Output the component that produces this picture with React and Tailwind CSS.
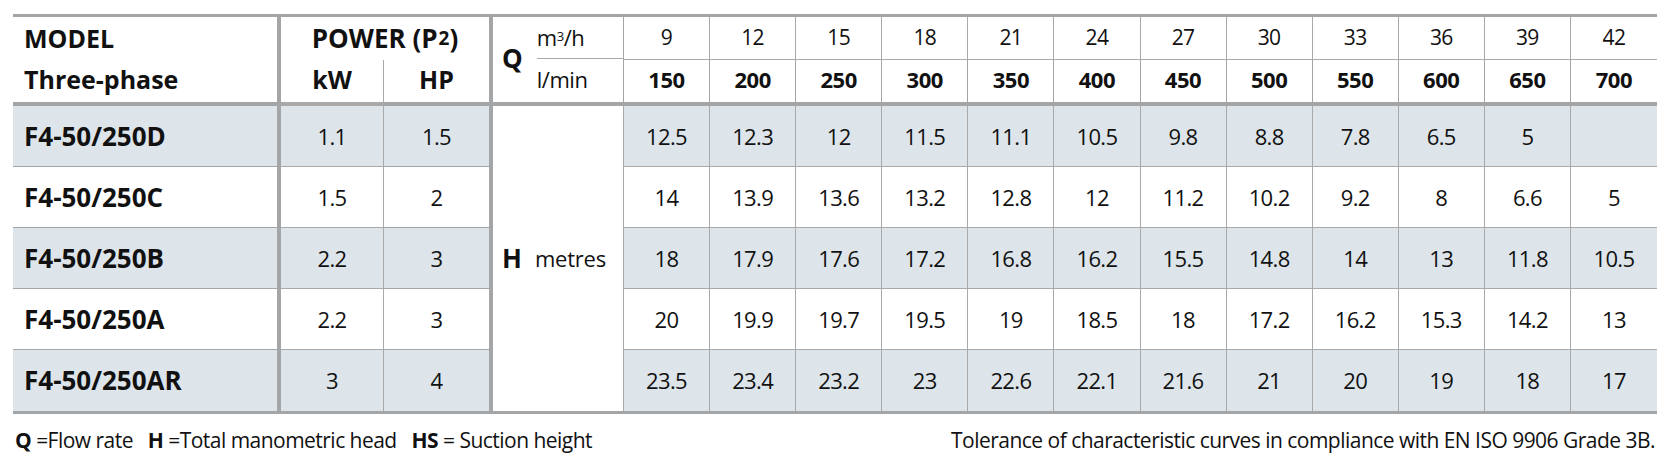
import React from 'react';

const flowM3 = [9, 12, 15, 18, 21, 24, 27, 30, 33, 36, 39, 42];
const flowL = [150, 200, 250, 300, 350, 400, 450, 500, 550, 600, 650, 700];

const models = [
  { name: 'F4-50/250D', kw: '1.1', hp: '1.5', h: ['12.5', '12.3', '12', '11.5', '11.1', '10.5', '9.8', '8.8', '7.8', '6.5', '5', ''] },
  { name: 'F4-50/250C', kw: '1.5', hp: '2', h: ['14', '13.9', '13.6', '13.2', '12.8', '12', '11.2', '10.2', '9.2', '8', '6.6', '5'] },
  { name: 'F4-50/250B', kw: '2.2', hp: '3', h: ['18', '17.9', '17.6', '17.2', '16.8', '16.2', '15.5', '14.8', '14', '13', '11.8', '10.5'] },
  { name: 'F4-50/250A', kw: '2.2', hp: '3', h: ['20', '19.9', '19.7', '19.5', '19', '18.5', '18', '17.2', '16.2', '15.3', '14.2', '13'] },
  { name: 'F4-50/250AR', kw: '3', hp: '4', h: ['23.5', '23.4', '23.2', '23', '22.6', '22.1', '21.6', '21', '20', '19', '18', '17'] },
];

const App = () => {
  return (
    <div className="w-[1667px] h-[458px] bg-white text-[#111] overflow-hidden" style={{ fontFamily: '"Open Sans", "Noto Sans", sans-serif' }}>
      <div className="ml-[13px] pt-[14px] w-[1644px]">
        {/* Table */}
        <div className="grid grid-cols-[268px_103px_109px_131px_repeat(12,minmax(0,1fr))] grid-rows-[43px_46px_61px_61px_61px_61px_61px] border-t-[3px] border-b-[3px] border-[#a3a5a7]">
          {/* Header row 1 */}
          <div className="row-span-2 flex flex-col border-r-4 border-b-4 border-[#a3a5a7] pl-[11px] text-[25px] font-bold">
            <div className="h-[43px] flex items-center">MODEL</div>
            <div className="flex-1 flex items-center pb-[3px]">Three-phase</div>
          </div>
          <div className="col-span-2 flex items-center justify-center border-r-4 border-[#a3a5a7] text-[26px] font-bold">
            POWER (P<span className="text-[19px] ml-[1px]">2</span>)
          </div>
          <div className="row-span-2 flex items-center border-r border-b-4 border-[#a3a5a7] pl-[9px]">
            <span className="text-[26px] font-bold mr-[14px] mt-[-2px]">Q</span>
            <div className="flex-1 flex flex-col h-full">
              <div className="h-[42px] flex items-center border-b border-[#a9a9a9] text-[22px] tracking-[-0.02em]">
                m<sup className="text-[13px] relative top-[-2px]">3</sup>/h
              </div>
              <div className="flex-1 flex items-center text-[22px] tracking-[-0.02em] pb-[3px]">l/min</div>
            </div>
          </div>
          {flowM3.map((v, i) => (
            <div key={'m' + i} className={`flex items-center justify-center border-b border-[#a9a9a9] text-[21px] tracking-[-0.03em] ${i < 11 ? 'border-r' : ''}`}>
              {v}
            </div>
          ))}

          {/* Header row 2 */}
          <div className="flex items-center justify-center border-r border-b-4 border-[#a9a9a9] text-[25px] font-bold pb-[3px]">
            kW
          </div>
          <div className="flex items-center justify-center border-r-4 border-b-4 border-[#a3a5a7] text-[25px] font-bold pb-[3px]">HP</div>
          {flowL.map((v, i) => (
            <div key={'l' + i} className={`flex items-center justify-center border-b-4 border-[#a3a5a7] text-[22px] font-bold tracking-[-0.02em] pb-[3px] ${i < 11 ? 'border-r' : ''}`}>
              <span>{v}</span>
            </div>
          ))}

          {/* Body */}
          {models.map((m, r) => {
            const shade = r % 2 === 0 ? 'bg-[#dde5ea]' : 'bg-white';
            const last = r === models.length - 1;
            const line = last ? '' : 'border-b';
            return (
              <React.Fragment key={m.name}>
                <div className={`flex items-center pl-[11px] border-r-4 border-[#a3a5a7] ${line} ${shade} text-[26px] font-bold`}>
                  {m.name}
                </div>
                <div className={`flex items-center justify-center border-r border-[#a9a9a9] ${line} ${shade} text-[22px] tracking-[-0.03em]`}>
                  {m.kw}
                </div>
                <div className={`flex items-center justify-center border-r-4 border-[#a3a5a7] ${line} ${shade} text-[22px] tracking-[-0.03em]`}>
                  {m.hp}
                </div>
                {r === 0 && (
                  <div className="row-span-5 flex items-center border-r border-[#a9a9a9] bg-white pl-[9px]">
                    <span className="text-[26px] font-bold mr-[13px]">H</span>
                    <span className="text-[22px] tracking-[-0.01em]">metres</span>
                  </div>
                )}
                {m.h.map((v, i) => (
                  <div key={i} className={`flex items-center justify-center border-[#a9a9a9] ${line} ${i < 11 ? 'border-r' : ''} ${shade} text-[22px] tracking-[-0.03em]`}>
                    {v}
                  </div>
                ))}
              </React.Fragment>
            );
          })}
        </div>

        {/* Footer notes */}
        <div className="mt-[11px] flex items-center justify-between px-[2px] text-[21px] tracking-[-0.025em]">
          <div>
            <span className="font-bold">Q</span> =Flow rate&nbsp;&nbsp; <span className="font-bold">H</span> =Total manometric head&nbsp;&nbsp; <span className="font-bold">HS</span> = Suction height
          </div>
          <div>Tolerance of characteristic curves in compliance with EN ISO 9906 Grade 3B.</div>
        </div>
      </div>
    </div>
  );
};

export default App;
